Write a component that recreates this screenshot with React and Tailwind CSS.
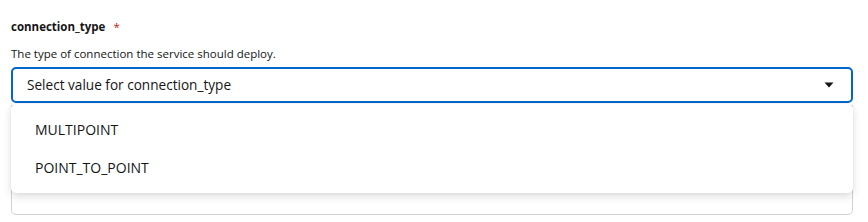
export default function App() {
  return (
    <div className="w-[868px] h-[222px] bg-white overflow-hidden" style={{ fontFamily: '"Open Sans", "Noto Sans", sans-serif' }}>
      <div className="pl-[11px] pr-[15px] pt-[18px]">
        <div className="flex items-center h-[18px] text-[11.5px] font-bold text-[#151515]">
          <span>connection_type</span>
          <span className="ml-[8px] text-[#c9190b] font-normal">*</span>
        </div>
        <div className="mt-[11px] h-[14px] text-[11.5px] text-[#151515] flex items-center">
          The type of connection the service should deploy.
        </div>
        <div className="relative mt-[6px]">
          <div className="h-[36px] rounded-[5px] border-2 border-[#0066cc] flex items-center pl-[14px] pr-[17px] text-[13.6px] text-[#151515]">
            <span className="flex-1">Select value for connection_type</span>
            <svg width="10" height="6" viewBox="0 0 10 6">
              <path d="M0.5 0.5 L9.5 0.5 L5 5.5 Z" fill="#151515" />
            </svg>
          </div>
          <div className="mt-[2px] h-[110px] rounded-b-[5px] border border-[#d2d2d2]" />
          <div className="absolute left-0 right-0 top-[37px] h-[89px] bg-white rounded-[5px] shadow-[0_4px_8px_0_rgba(3,3,3,0.12),0_0_4px_0_rgba(3,3,3,0.06)] py-[6px]">
            <div className="h-[38px] flex items-center pl-[24px] text-[14px] text-[#151515]">MULTIPOINT</div>
            <div className="h-[38px] flex items-center pl-[24px] text-[14px] text-[#151515]">POINT_TO_POINT</div>
          </div>
        </div>
      </div>
    </div>
  );
}
